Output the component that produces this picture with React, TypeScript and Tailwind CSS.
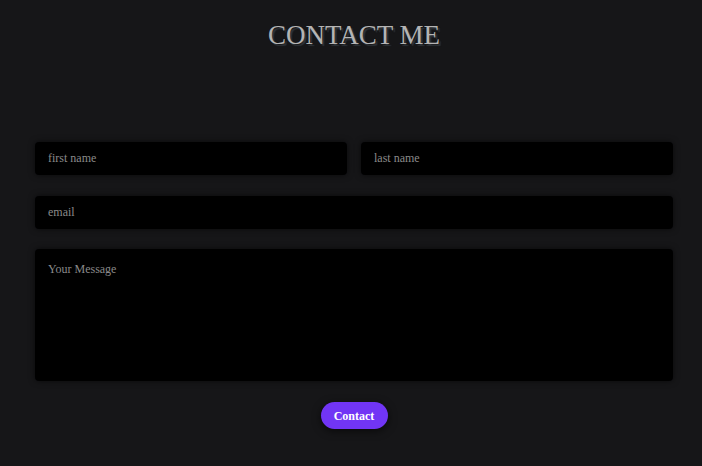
import React from "react";

export default function App() {
  const serif = { fontFamily: '"Liberation Serif", "Times New Roman", serif' };
  const field =
    "rounded-[4px] bg-black px-[13px] text-[12px] text-[#8a8a8a] placeholder-[#8a8a8a] shadow-[0_0_6px_rgba(0,0,0,0.6)] outline-none";
  return (
    <div className="min-h-[466px] w-full bg-[#161618] pl-[35px] pr-[29px] pt-[17px]" style={serif}>
      <h1 className="text-center text-[27px] leading-[36px] text-[#b4b4b4] [text-shadow:2px_2px_1px_#2e3338]">
        CONTACT ME
      </h1>
      <form className="mt-[89px] flex flex-col" onSubmit={(e) => e.preventDefault()}>
        <div className="flex gap-[14px]">
          <input placeholder="first name" className={`h-[33px] min-w-0 flex-1 ${field}`} />
          <input placeholder="last name" className={`h-[33px] min-w-0 flex-1 ${field}`} />
        </div>
        <input placeholder="email" className={`mt-[21px] h-[33px] w-full ${field}`} />
        <textarea
          placeholder="Your Message"
          className={`mt-[20px] block h-[132px] w-full resize-none py-[11px] ${field}`}
        />
        <div className="mt-[21px] flex justify-center">
          <button
            type="submit"
            className="h-[27px] w-[67px] rounded-full bg-[#7135f5] text-[12px] font-bold text-white shadow-[0_2px_8px_rgba(0,0,0,0.6)]"
          >
            Contact
          </button>
        </div>
      </form>
    </div>
  );
}
